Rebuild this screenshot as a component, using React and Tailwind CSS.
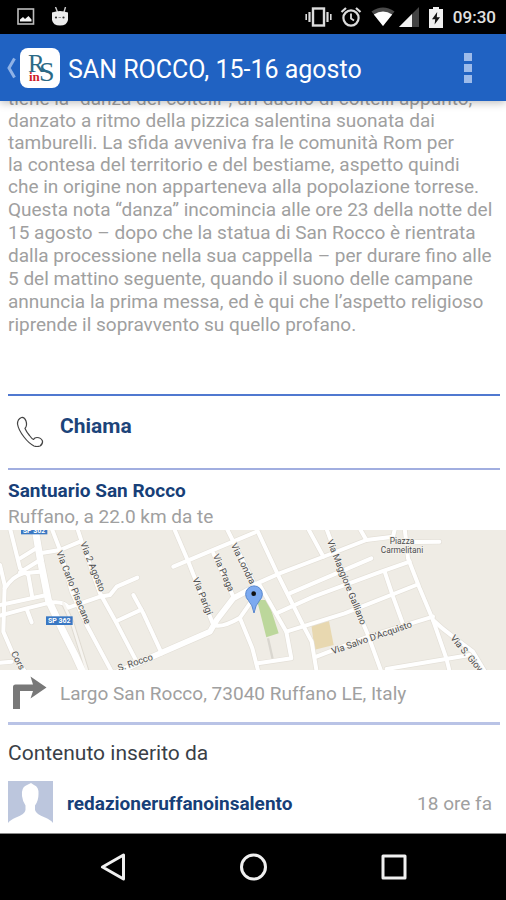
import React from 'react';

const roads = [
    'M30 10 L60 130 L85 150 L97 218',
    'M112 68 L60 100',
    'M0 120 L14 180 L10 320 L40 390 L75 440',
    'M14 190 Q40 152 70 145 L120 140',
    'M60 142 L120 105',
    'M0 240 L140 210',
    'M0 272 L80 250 L140 235',
    'M80 252 L95 292',
    'M0 413 L35 410',
    'M120 85 L180 75 L240 50',
    'M155 10 L180 75 L215 200 L260 300 L335 440',
    'M232 10 L245 50 L300 205 L350 295 L410 410',
    'M140 235 Q190 225 205 248 L300 215 L330 210 L350 185 L412 158',
    'M350 288 L424 254',
    'M400 210 L430 265 L485 385',
    'M520 125 L765 22',
    'M522 10 L565 110 L640 300',
    'M640 85 L700 215',
    'M680 10 L765 180',
    'M640 300 Q665 310 720 278 L750 235',
    'M720 280 L757 370 L775 440',
    'M769 10 L834 150 L864 210 L914 310 L935 350 L950 440',
    'M765 178 L839 145 L984 90 L1099 45 L1179 35 L1185 10',
    'M924 10 L970 95',
    'M979 10 L1049 200 L1104 330 L1144 440',
    'M1079 10 L1099 45',
    'M869 205 L1114 100',
    'M829 265 L940 215 L1129 145 L1229 110',
    'M859 320 L1034 265 L1249 180',
    'M779 180 L859 320 L874 400 L774 415',
    'M1214 10 L1224 100 L1259 190 L1299 285 L1339 400 L1349 440',
    'M1154 140 L1179 215 L1210 300',
    'M949 395 L1104 335 L1299 275',
    'M1299 285 Q1325 310 1359 335 L1419 380 L1455 440',
    'M1160 432 L1409 390',
    'M1189 52 L1318 50',
];

const mainRoads = ['M105 10 L122 110 L145 225 L185 310 L225 390 L250 445'];

const streets = [
    { name: 'Via Carlo Pisacane', x: 168, y: 82, angle: 68, size: 28 },
    { name: 'Via 2 Agosto', x: 240, y: 55, angle: 68, size: 28 },
    { name: 'Via Parigi', x: 577, y: 162, angle: 68, size: 28 },
    { name: 'Via Praga', x: 638, y: 92, angle: 66, size: 28 },
    { name: 'Via Londra', x: 692, y: 60, angle: 64, size: 28 },
    { name: 'Via Maggiore Galliano', x: 980, y: 48, angle: 68, size: 28 },
    { name: "Via Salvo D'Acquisto", x: 998, y: 388, angle: -19, size: 28 },
    { name: 'Via S. Giov', x: 1350, y: 340, angle: 50, size: 28 },
    { name: 'Cors', x: 32, y: 385, angle: 62, size: 28 },
    { name: 'S. Rocco', x: 357, y: 439, angle: -19, size: 28 },
];

const StatusBar = () => (
    <div className="flex h-[34px] shrink-0 items-center justify-between bg-black pl-4 pr-[10px]">
        <div className="flex items-center gap-4">
            <svg className="h-5 w-5" viewBox="0 0 20 20" fill="none">
                <rect x="2" y="2" width="15.5" height="15" stroke="#bdbdbd" strokeWidth="1.6" />
                <path d="M4 14.5 V12.5 L7 10 L9 12 L12.5 9 L15.5 12.5 V14.5 Z" fill="#f5f5f5" />
            </svg>
            <svg className="h-5 w-5" viewBox="0 0 20 20">
                <path d="M3.5 0 L5.5 5 M13.5 0 L12 5" stroke="#cfcfcf" strokeWidth="1.4" />
                <path d="M0 5.5 Q8 2.5 16 5.5 V13 Q15 18.5 8 18.5 Q1 18.5 0 13 Z" fill="#ececec" />
                <circle cx="4" cy="10.5" r="1.1" fill="#333" />
                <circle cx="11.5" cy="10.5" r="1.1" fill="#333" />
                <path d="M6.5 10.5 H9" stroke="#999" />
            </svg>
        </div>
        <div className="flex items-center">
            <svg className="mr-2 h-[22px] w-[27px]" viewBox="0 0 27 22" fill="none" stroke="#dcdcdc">
                <rect x="8" y="2.5" width="11" height="17" strokeWidth="2.4" />
                <path d="M4.5 6 V16 M22.5 6 V16" strokeWidth="2.2" />
                <path d="M1.2 8 V14 M25.8 8 V14" strokeWidth="1.6" />
            </svg>
            <svg className="mr-[9px] h-[22px] w-[22px]" viewBox="0 0 22 22" fill="none" stroke="#dcdcdc">
                <circle cx="11" cy="12" r="7.6" strokeWidth="2.2" />
                <path d="M11 7.5 V12.5 L14 14.5" strokeWidth="1.8" />
                <path d="M1.5 6 L6 2 M20.5 6 L16 2" strokeWidth="2.2" />
            </svg>
            <svg className="mr-1 h-[20px] w-[24px]" viewBox="0 0 24 20">
                <path d="M12 19 L0.5 4.5 Q12 -3.5 23.5 4.5 Z" fill="#4a4a4a" />
                <path d="M12 19 L2.8 7.4 Q12 1.5 21.2 7.4 Z" fill="#fff" />
            </svg>
            <svg className="mr-[10px] h-[20px] w-[20px]" viewBox="0 0 20 20">
                <path d="M0 20 L20 0 V20 Z" fill="#444" />
                <path d="M0 20 L13 7 V20 Z" fill="#f2f2f2" />
            </svg>
            <svg className="mr-[10px] h-[21px] w-[14px]" viewBox="0 0 14 21">
                <path d="M4 0 H10 V2 H14 V21 H0 V2 H4 Z" fill="#f0f0f0" />
                <path d="M8.2 5 L3 12.2 H6.2 L5.6 17.5 L11 10.2 H7.8 Z" fill="#111" />
            </svg>
            <span className="text-[17px] font-medium leading-6 text-[#e0e0e0]">09:30</span>
        </div>
    </div>
);

const ActionBar = () => (
    <header className="relative z-10 flex h-[67px] shrink-0 items-center bg-[#2062c2] shadow-[0_2px_8px_rgba(0,0,0,0.25)]">
        <a href="#indietro" aria-label="Indietro" className="flex items-center pl-[6px]">
            <svg className="h-[22px] w-[10px]" viewBox="0 0 10 22" fill="none">
                <path d="M8.5 1.5 L3 11 L8.5 20.5" stroke="#8fb2e6" strokeWidth="3" />
            </svg>
            <svg className="ml-1 h-10 w-10" viewBox="0 0 40 40">
                <rect width="40" height="40" rx="8" fill="#fff" />
                <text x="8" y="24" fontFamily="Liberation Serif, serif" fontSize="25" fill="#2b6a86">R</text>
                <text x="19" y="33" fontFamily="Liberation Serif, serif" fontSize="28" fill="#2b6a86">S</text>
                <text x="9" y="33" fontFamily="Liberation Serif, serif" fontSize="13" fontWeight="700" fill="#cf2027">in</text>
            </svg>
        </a>
        <h1 className="ml-2 flex-1 truncate pt-1 text-[25px] leading-8 text-white">SAN ROCCO, 15-16 agosto</h1>
        <button type="button" aria-label="Altre opzioni" className="mr-[34px] flex flex-col gap-[3px]">
            <span className="h-2 w-2 bg-[#9dbbea]" />
            <span className="h-2 w-2 bg-[#9dbbea]" />
            <span className="h-2 w-2 bg-[#9dbbea]" />
        </button>
    </header>
);

const StreetMap = () => (
    <svg className="block h-[140px] w-full" viewBox="0 15 1518 420" preserveAspectRatio="xMidYMid slice">
        <rect x="0" y="15" width="1518" height="420" fill="#efece5" />
        <path d="M771 225 L804 225 L836 325 L799 337 Z" fill="#bcd79b" />
        <path d="M934 300 L987 288 L1001 360 L944 374 Z" fill="#e8d8b0" />
        <path d="M804 340 L818 402" stroke="#d9d6cf" strokeWidth="7" />
        <g fill="none" strokeLinecap="round" strokeLinejoin="round">
            {roads.map((d) => <path key={d} d={d} stroke="#e4e0d8" strokeWidth="16" />)}
            <path d="M190 235 L215 290 L262 440" stroke="#dfdbd2" strokeWidth="14" />
            <path d="M345 445 L480 385 L630 320 L650 285 L700 220 L765 185" stroke="#e4e0d8" strokeWidth="21" />
            {mainRoads.map((d) => <path key={d} d={d} stroke="#e4e0d8" strokeWidth="25" />)}
            {roads.map((d) => <path key={d} d={d} stroke="#fff" strokeWidth="12" />)}
            <path d="M190 235 L215 290 L262 440" stroke="#f7f5f1" strokeWidth="8" />
            <path d="M345 445 L480 385 L630 320 L650 285 L700 220 L765 185" stroke="#fff" strokeWidth="17" />
            {mainRoads.map((d) => <path key={d} d={d} stroke="#fff" strokeWidth="21" />)}
        </g>
        <g fontFamily="Roboto, sans-serif" fill="#4d4d4d" stroke="#f4f2ed" strokeWidth="5" paintOrder="stroke">
            {streets.map(({ name, x, y, angle, size }) => (
                <text key={name} fontSize={size} transform={`translate(${x} ${y}) rotate(${angle})`}>{name}</text>
            ))}
            <text x="1206" y="58" fontSize="25" textAnchor="middle">Piazza</text>
            <text x="1206" y="83" fontSize="25" textAnchor="middle">Carmelitani</text>
        </g>
        <g fontFamily="Roboto, sans-serif" fontSize="21" fontWeight="700" fill="#fff" textAnchor="middle">
            <rect x="63" y="4" width="79" height="24" fill="#3a78c3" />
            <text x="102" y="23">SP 362</text>
            <rect x="138" y="274" width="80" height="26" fill="#3a78c3" />
            <text x="178" y="294">SP 362</text>
        </g>
        <path d="M762 264 Q758 240 745 226 A25 25 0 1 1 779 226 Q766 240 762 264 Z" fill="#7caaf0" stroke="#5585cf" strokeWidth="3" />
        <circle cx="761" cy="206" r="7" fill="#111" />
    </svg>
);

const NavBar = () => (
    <nav className="flex h-[67px] shrink-0 items-center justify-center gap-28 border-t border-[#8a8a8a] bg-black">
        <button type="button" aria-label="Indietro">
            <svg className="h-7 w-7" viewBox="0 0 28 28" fill="none" stroke="#f0f0f0" strokeWidth="3" strokeLinejoin="round">
                <path d="M24.5 2 V26 L3.5 14 Z" />
            </svg>
        </button>
        <button type="button" aria-label="Home">
            <svg className="h-7 w-7" viewBox="0 0 28 28" fill="none" stroke="#f0f0f0" strokeWidth="3">
                <circle cx="14.5" cy="14" r="12" />
            </svg>
        </button>
        <button type="button" aria-label="App recenti">
            <svg className="h-7 w-7" viewBox="0 0 28 28" fill="none" stroke="#f0f0f0" strokeWidth="3" strokeLinejoin="round">
                <rect x="4" y="3" width="22" height="22" />
            </svg>
        </button>
    </nav>
);

const App = () => {
    return (
        <div className="flex h-screen flex-col overflow-hidden bg-white font-['Roboto',sans-serif]">
            <StatusBar />
            <ActionBar />

            {/* Scrolled to the end, so the top of the article runs under the bar */}
            <main className="flex min-h-0 flex-1 flex-col justify-end overflow-hidden">
                <article className="shrink-0 px-2 text-[19px] text-[#a0a0a0]">
                    <p className="leading-[22px]">
                        tiene la “danza dei coltelli”, un duello di coltelli appunto,<br />
                        danzato a ritmo della pizzica salentina suonata dai<br />
                        tamburelli. La sfida avveniva fra le comunità Rom per<br />
                        la contesa del territorio e del bestiame, aspetto quindi<br />
                        che in origine non apparteneva alla popolazione torrese.
                    </p>
                    <p className="leading-[23px]">
                        Questa nota “danza” incomincia alle ore 23 della notte del<br />
                        15 agosto – dopo che la statua di San Rocco è rientrata<br />
                        dalla processione nella sua cappella – per durare fino alle<br />
                        5 del mattino seguente, quando il suono delle campane<br />
                        annuncia la prima messa, ed è qui che l’aspetto religioso<br />
                        riprende il sopravvento su quello profano.
                    </p>
                </article>

                <a href="#chiama" className="mx-2 mr-[6px] mt-[58px] flex h-[76px] shrink-0 items-start border-y-2 border-t-[#5079d0] border-b-[#a1aee0] pt-4">
                    <svg className="ml-2 mt-1 h-8 w-7" viewBox="0 0 28 32" fill="none" stroke="#444" strokeWidth="1.2" strokeLinejoin="round">
                        <path d="M5.5 1.5 Q1.5 3 1.5 8 Q2.5 14 8 21 Q13 27.5 18 30 Q21 31 24 30 Q27 28 26.5 25 Q25 21.5 21 21.5 Q18.500 21.5 17.500 23.500 Q16 23 13.500 19.500 Q10.500 16 9 12.500 Q11.500 9.500 10 5 Q8.500 1 5.500 1.500 Z" />
                    </svg>
                    <span className="ml-4 pt-[2px] text-[21px] font-bold leading-6 text-[#1c447a]">Chiama</span>
                </a>

                <section className="shrink-0">
                    <h2 className="px-2 pt-2 text-[19px] font-bold leading-[26px] text-[#173f78]">Santuario San Rocco</h2>
                    <p className="px-2 text-[19px] leading-[26px] text-[#a0a0a0]">Ruffano, a 22.0 km da te</p>
                    <StreetMap />
                    <a href="#percorso" className="mx-2 mr-[6px] flex h-[55px] items-start border-b-[3px] border-[#b9c3e6] pt-[6px]">
                        <svg className="ml-1 h-[34px] w-[35px]" viewBox="0 0 35 34">
                            <path d="M1 33 V11 Q1 8.500 3.500 8.500 H21 L18.500 0.500 L34.500 11.500 L18.500 22.500 L21 15 H8 V33 Z" fill="#787878" />
                        </svg>
                        <span className="ml-[13px] pt-[6px] text-[19px] leading-6 text-[#a0a0a0]">Largo San Rocco, 73040 Ruffano LE, Italy</span>
                    </a>
                </section>

                <section className="shrink-0 px-2 pb-[10px] pt-4">
                    <h3 className="text-[21px] leading-6 text-[#3a3f47]">Contenuto inserito da</h3>
                    <div className="mt-4 flex items-center">
                        <svg className="h-[42px] w-[45px]" viewBox="0 0 45 42">
                            <rect width="45" height="42" fill="#bcc6dd" />
                            <path d="M0 42 Q2 39 8 36.500 Q17 33 17.500 29 V24.500 Q14.500 20 14 15 Q13 7 18 4.500 L23 2 L26 4 Q31 6 30.500 13 Q30.500 20 27 24.500 V29 Q28 33 37 36.500 Q43 39 45 42 Z" fill="#fff" />
                        </svg>
                        <a href="#redazione" className="ml-[14px] flex-1 pt-1 text-[19px] font-bold leading-6 text-[#173f78]">redazioneruffanoinsalento</a>
                        <span className="mr-[6px] pt-1 text-[19px] leading-6 text-[#a0a0a0]">18 ore fa</span>
                    </div>
                </section>
            </main>

            <NavBar />
        </div>
    );
};

export default App;
